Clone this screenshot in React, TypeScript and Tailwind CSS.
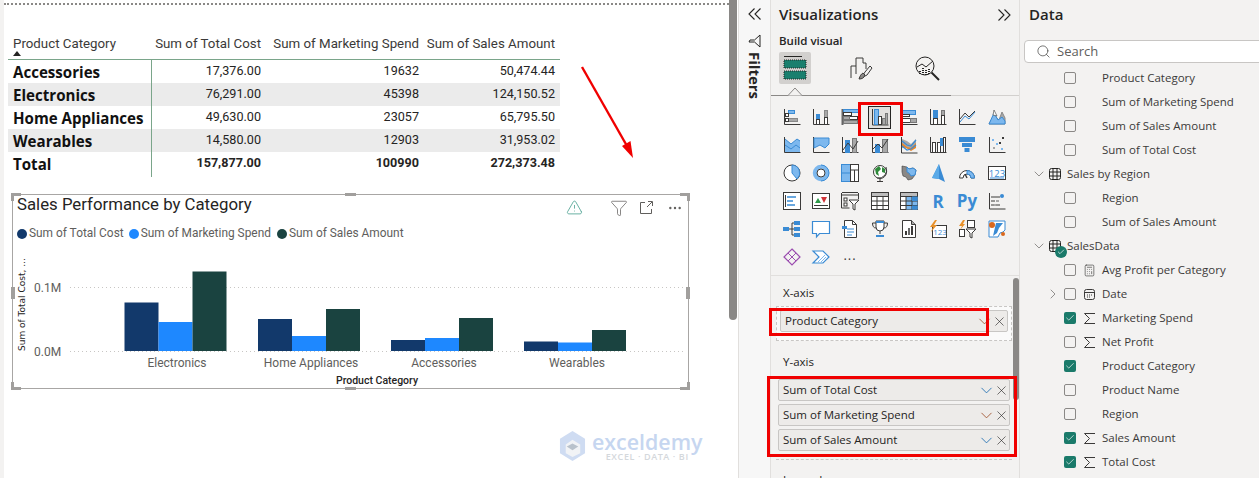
import React from "react";
import { Check, ChevronDown, ChevronRight, X, Search, Calculator, Ellipsis, Funnel, TriangleAlert } from "lucide-react";

const B = "#3a8bd4", L = "#7db8ee", G = "#a8a8a8", D = "#3b3a39";
const Ax = () => <path d="M1.5 1v15.5h16" fill="none" stroke={D} />;
const R = (p: { x: number; y: number; w: number; h: number; f?: string; s?: string }) => (
  <rect x={p.x + 0.5} y={p.y + 0.5} width={p.w} height={p.h} fill={p.f ?? L} stroke={p.s ?? B} />
);

const icons: React.ReactNode[] = [
  <><Ax /><R x={5} y={2} w={6} h={3} /><R x={2} y={5} w={3} h={3} f="#fff" s={D} /><R x={5} y={10} w={9} h={3} f={G} s="#888" /><R x={2} y={10} w={3} h={3} f="#fff" s={D} /></>,
  <><Ax /><R x={4} y={6} w={3} h={5} f={B} /><R x={4} y={11} w={3} h={5} f="#fff" s={D} /><R x={12} y={2} w={3} h={7} f={G} s="#888" /><R x={12} y={9} w={3} h={7} f="#fff" s={D} /></>,
  <><path d="M1.5 1v16" stroke="#666" strokeWidth="2" /><R x={2} y={1} w={15} h={3} /><R x={2} y={4} w={8} h={3} f="#fff" s={D} /><R x={8} y={8} w={8} h={3} f="#fff" s={D} /><R x={2} y={8} w={6} h={3} f={G} s="#777" /><R x={2} y={12} w={14} h={3} f={G} s="#777" /></>,
  <><path d="M1.5 1v16h16" fill="none" stroke={D} /><R x={3} y={1} w={4} h={15} /><R x={7} y={8} w={3} h={8} f="#fff" s={D} /><R x={11} y={10} w={3} h={6} f={G} s="#777" /><R x={14} y={5} w={2} h={11} f={G} s="#777" /></>,
  <><Ax /><R x={2} y={2} w={13} h={4} /><R x={2} y={6} w={7} h={2} f="#fff" s={D} /><R x={2} y={10} w={8} h={4} f="#fff" s={D} /><R x={10} y={10} w={6} h={4} f={G} s="#777" /></>,
  <><Ax /><R x={4} y={2} w={4} h={8} f={B} /><R x={4} y={10} w={4} h={6} f="#fff" s={D} /><R x={12} y={2} w={3} h={5} f={G} s="#777" /><R x={12} y={7} w={3} h={9} f="#fff" s={D} /></>,
  <><Ax /><path d="M2 11l5-6 4 4 6-6" fill="none" stroke={D} /><path d="M2 14l5-6 4 3 6-7" fill="none" stroke={B} /></>,
  <><path d="M1 16l5-9 5 5 3-8 3 6v6z" fill={G} stroke="#888" /><path d="M1 16l5-11 4 7 4-3 3 4v3z" fill={L} stroke={B} /><path d="M5 7l1-5 3 6z" fill="#fff" stroke={D} strokeWidth=".6" /></>,

  <><Ax /><path d="M2 3l6 5 6-5 3 2v11H2z" fill={L} /><path d="M2 3l6 5 6-5 3 2" fill="none" stroke={B} /><path d="M2 9l6 4 5-4 4 3" fill="none" stroke={B} /></>,
  <><Ax /><path d="M2 2h15v6l-4 4-5-3-6 3z" fill={L} stroke={B} /></>,
  <><Ax /><R x={4} y={4} w={4} h={12} f={B} /><R x={11} y={2} w={4} h={14} f={G} s="#777" /><path d="M2 14l5-7 5 6 5-8" fill="none" stroke={D} /></>,
  <><Ax /><R x={4} y={8} w={4} h={8} f={B} /><R x={11} y={3} w={5} h={13} f={G} s="#777" /><path d="M2 13l5-5 4 4 6-9" fill="none" stroke={D} /></>,
  <><path d="M1.5 1v16h16" fill="none" stroke={D} /><path d="M2 3l5 2 4 3 5-5v8l-5 3-5-3-4 1z" fill={G} /><path d="M2 7l5 4 4 1 5-5v5l-5 3-5-3-4-1z" fill="#e8862a" /><path d="M2 5l5 4 4 1 5-6M2 10l5 4 4-1 5-4" fill="none" stroke={B} strokeWidth="1.2" /></>,
  <><Ax /><R x={3} y={6} w={3} h={10} f="#fff" s={D} /><R x={8} y={6} w={3} h={10} f="#fff" s={D} /><R x={11} y={2} w={3} h={7} f={B} /><R x={14} y={1} w={2} h={15} f="#fff" s={D} /></>,
  <><rect x="1" y="1" width="16" height="5" fill={B} /><rect x="4" y="7" width="10" height="4" fill={B} /><rect x="6.500" y="12" width="5" height="4" fill={B} /></>,
  <><Ax /><rect x="4" y="3" width="2" height="2" fill={L} /><rect x="8" y="7" width="2" height="2" fill={L} /><rect x="13" y="12" width="2" height="2" fill={L} /><rect x="14" y="1" width="2" height="2" fill={D} /><rect x="11" y="6" width="2" height="2" fill={D} /><rect x="5" y="11" width="2" height="2" fill={G} /></>,

  <><circle cx="9" cy="9" r="8" fill="#fff" stroke={D} /><path d="M9 9V1a8 8 0 0 1 5 14z" fill={L} stroke={B} /></>,
  <><circle cx="9" cy="9" r="6.2" fill="none" stroke={L} strokeWidth="4" /><path d="M9 1a8 8 0 0 1 0 16" fill="none" stroke={B} /><circle cx="9" cy="9" r="4" fill="#fff" stroke={D} /></>,
  <><R x={0} y={0} w={9} h={17} /><path d="M.5 9h9" stroke={B} /><rect x="9.5" y=".5" width="8" height="17" fill="#fff" stroke={D} /><path d="M9.5 6h8M13.5 6v11" stroke={D} /></>,
  <><circle cx="9" cy="8" r="6.5" fill="#fff" stroke={D} /><path d="M4 5l4-3 2 3-3 3 1 4-3-2z" fill="#2f8a3a" /><path d="M11 3l3 2v4l-3-1z" fill="#2f8a3a" /><path d="M15 3a8 8 0 0 1-9 11M9 15v2M6 17.5h6" fill="none" stroke={D} /></>,
  <><path d="M2 2l5 1 2 2 4-1 3 2-1 5-3 4-4 1-2-3-3-1-1-4z" fill="#8a8886" stroke={D} strokeWidth=".6" /><path d="M7 3l2 2 4-1 3 2-1 5-4 1-2-3-2-1z" fill={L} stroke={B} /></>,
  <><path d="M10 0L3 14l7 1 6 3z" fill={B} /><path d="M10 0L3 14l7 1z" fill="#5aaae8" /></>,
  <><path d="M1.500 14a7.500 7.500 0 0 1 15 0h-3.500a4 4 0 0 0-8 0z" fill="#fff" stroke={D} /><path d="M9 6.500a7.500 7.500 0 0 1 7.500 7.500h-3.500a4 4 0 0 0-4-4z" fill={L} stroke={B} /><path d="M9 14l-2-4" stroke={D} strokeWidth="1.4" /></>,
  <><rect x=".5" y="2.5" width="17" height="13" fill="#fff" stroke={D} /><text x="9" y="12.5" textAnchor="middle" fontSize="9.500" fontFamily="Open Sans" fill={B}>123</text><path d="M2 14h14" stroke={B} /></>,

  <><rect x=".5" y=".5" width="17" height="17" fill="#fff" stroke={D} /><path d="M4 5h9M4 9h6M4 13h8" stroke={B} strokeWidth="1.4" /><path d="M2.500 3v12" stroke={D} /></>,
  <><rect x=".5" y="1.5" width="17" height="15" fill="#fff" stroke={D} /><path d="M3 11l3-5 3 5z" fill="#2f9a4a" /><path d="M9 5h6l-3 6z" fill="#d13438" /><path d="M2 13.500h14" stroke={D} /></>,
  <><path d="M1 .5h16M.5 1v15h8M17.500 1v6" fill="none" stroke={D} /><path d="M1 3h16" stroke={D} /><rect x="3" y="6" width="3" height="3" fill="#fff" stroke={D} /><rect x="3" y="11" width="3" height="3" fill="#fff" stroke={D} /><path d="M8 8h10l-4 4v6l-2-1v-5z" fill="#fff" stroke={D} /></>,
  <><rect x=".5" y=".5" width="17" height="17" fill="#fff" stroke={D} /><path d="M.5 4.500h17M.5 9h17M.5 13.500h17M6 .5v17M12 .5v17" stroke={D} /><rect x=".5" y=".5" width="17" height="4" fill="#bdbdbd" stroke={D} /></>,
  <><rect x=".5" y=".5" width="17" height="17" fill="#fff" stroke={D} /><rect x="6" y="4.500" width="11.500" height="13" fill={L} /><rect x=".5" y=".5" width="17" height="4" fill="#bdbdbd" stroke={D} /><path d="M.5 9h17M.5 13.500h17M6 4.500v13M12 4.500v13" stroke={D} /><rect x="12" y="4.500" width="5.500" height="4.500" fill={B} /><rect x="12" y="13.500" width="5.500" height="4" fill={B} /></>,
  <text x="9" y="16" textAnchor="middle" fontSize="17" fontWeight="700" fontFamily="Open Sans" fill={B}>R</text>,
  <text x="9" y="15" textAnchor="middle" fontSize="17" fontWeight="700" fontFamily="Open Sans" fill={B}>Py</text>,
  <><path d="M1.500 1v16h16" fill="none" stroke={D} /><path d="M3 5h9M3 9h4M3 13h9" stroke={D} /><circle cx="14" cy="4" r="2" fill={B} /><rect x="8" y="8" width="3" height="2" fill={G} /><rect x="6" y="12" width="2" height="2" fill={G} /></>,

  <><rect x="0" y="7" width="6" height="4" fill={B} /><path d="M6 9h3M9 3v12M9 3h2M9 9h2M9 15h2" stroke={D} fill="none" /><rect x="11" y="1" width="6" height="4" fill={B} /><rect x="11" y="7" width="6" height="4" fill={B} /><rect x="11" y="13" width="6" height="4" fill={B} /></>,
  <><path d="M.5 1.500h17v12H7.500l-3 3.500v-3.500h-4z" fill="#fff" stroke={B} strokeWidth="1.2" /></>,
  <><path d="M3.500.5h8l4 4v13h-12z" fill="#fff" stroke={D} /><path d="M11.500.5v4h4" fill="none" stroke={D} /><path d="M1 6h5v3H1z" fill={B} /><path d="M6 9h7M6 12h7M6 15h5" stroke={B} /></>,
  <><path d="M5 1h8v6a4 4 0 0 1-8 0z" fill="#fff" stroke={D} /><path d="M5 3H1.500c0 3 1 5 3.500 5M13 3h3.500c0 3-1 5-3.500 5M9 11v3M5 16.500h8" fill="none" stroke={D} /><rect x="5" y="1" width="8" height="2" fill={B} /><rect x="5" y="15" width="8" height="2" fill={B} /></>,
  <><path d="M2.500.5h9l4 4v13h-13z" fill="#fff" stroke={D} /><path d="M11.500.5v4h4" fill={G} stroke={D} /><rect x="5" y="11" width="2" height="4" fill={D} /><rect x="8" y="8" width="2" height="7" fill="#666" /><rect x="11" y="6" width="2" height="9" fill={D} /></>,
  <><rect x="3.500" y="5.500" width="14" height="12" fill="#fff" stroke={D} /><text x="11" y="15" textAnchor="middle" fontSize="8" fontFamily="Open Sans" fill={B}>123</text><path d="M6 0L1 7h3l-2 5 6-7H5l3-5z" fill="#e8912a" /></>,
  <><rect x="9.500" y=".5" width="7" height="7" fill="#fff" stroke={D} /><rect x="1.500" y="9.500" width="5" height="7" fill="#fff" stroke={D} /><path d="M8 9h10l-4 4v5l-2-1v-4z" fill="#fff" stroke={D} /><path d="M5 0L1 6h3L2 10l5-6H5l2-4z" fill="#e8912a" /></>,
  <><path d="M1 1h16v9l-2 2-3 1-2 4H1z" fill="#fff" stroke={B} /><path d="M8 3h7l-4 5-2 5-4 3z" fill={B} /><circle cx="4" cy="5" r="3" fill="#d9681d" /><circle cx="15" cy="14" r="2" fill="#d9681d" /></>,

  <><path d="M9 1l8 8-8 8-8-8z" fill="none" stroke="#9c4fb0" strokeWidth="1.2" /><path d="M9 1l4 4-4 4-4-4zM9 9l4 4-4 4-4-4z" fill="none" stroke="#9c4fb0" /></>,
  <><path d="M1 3h10l6 6-6 6H1l6-6z" fill="#fff" stroke={B} strokeWidth="1.2" /><path d="M6 14l7-7M9 14l5-5" stroke={L} /></>,
  <text x="9" y="12" textAnchor="middle" fontSize="13" fontFamily="Open Sans" fill={D} letterSpacing="1">...</text>,
];

const Box = ({ checked }: { checked?: boolean }) =>
  checked ? (
    <span className="flex h-3 w-3 items-center justify-center rounded-[2px] bg-[#1a7a6a]"><Check size={10} color="#fff" strokeWidth={1.6} /></span>
  ) : (
    <span className="block h-3 w-3 rounded-[2px] border border-[#8a8886]" />
  );

const Sig = () => (
  <svg width="13" height="13" viewBox="0 0 13 13" fill="none" stroke="#3b3a39"><path d="M12 1.500H1.500L6.500 6.500 1.500 11.500H12" /></svg>
);
const Cal = () => (
  <svg width="13" height="13" viewBox="0 0 13 13" fill="none" stroke="#3b3a39"><rect x="1.500" y="1.500" width="10" height="10" rx="2" /><path d="M1.500 4.500h10" /><path d="M4 7h1M6 7h1M8 7h1M4 9h1M6 9h1" strokeWidth="1" /></svg>
);
const Calc = () => <Calculator size={15} strokeWidth={1.2} color="#3b3a39" />;
const Tbl = () => (
  <svg width="12" height="12" viewBox="0 0 12 12" fill="none" stroke="#252423"><rect x=".5" y=".5" width="11" height="11" rx="2" /><path d="M.5 4h11M.5 8h11M4 .5v11M8 .5v11" /></svg>
);
const Dbl = ({ left }: { left?: boolean }) => (
  <svg width="14" height="12" viewBox="0 0 14 12" fill="none" stroke="#252423" strokeWidth="1.1">
    <path d={left ? "M6.500.5L1 6l5.500 5.500M12.500.5L7 6l5.500 5.500" : "M1.500.5L7 6l-5.500 5.500M7.500.5L13 6l-5.500 5.500"} />
  </svg>
);

const Field = ({ text, checked, icon, expand }: { text: string; checked?: boolean; icon?: React.ReactNode; expand?: boolean }) => (
  <div className="flex h-6 shrink-0 items-center pl-[28px] text-[#3b3a39]">
    <span className="flex w-4 items-center">{expand && <ChevronRight size={16} strokeWidth={1} color="#605e5c" className="-ml-[3px]" />}</span>
    <Box checked={checked} />
    <span className="ml-[7px] flex w-[13px] items-center justify-center">{icon}</span>
    <span className="ml-[6px] whitespace-nowrap">{text}</span>
  </div>
);
const TableRow = ({ text, badge }: { text: string; badge?: boolean }) => (
  <div className="flex h-6 shrink-0 items-center pl-[11px] text-[#3b3a39]">
    <ChevronDown size={16} strokeWidth={1} color="#605e5c" />
    <span className="relative ml-[2px] flex"><Tbl />
      {badge && <span className="absolute left-[6px] top-[6px] flex h-3 w-3 items-center justify-center rounded-full bg-[#1a7a6a]"><Check size={8} color="#fff" strokeWidth={2} /></span>}
    </span>
    <span className="ml-[6px] whitespace-nowrap">{text}</span>
  </div>
);

const Pill = ({ text, warm }: { text: string; warm?: boolean }) => (
  <div className="flex h-[22px] items-center rounded-[2px] border border-[#c8c6c4] bg-[#edebe9] pl-[4px] text-[#252423]">
    <span className="flex-1 whitespace-nowrap">{text}</span>
    <ChevronDown size={19} strokeWidth={1.1} color={warm ? "#a0522d" : "#1f6fb2"} />
    <X size={15} strokeWidth={1} color="#252423" className="-ml-[2px]" />
  </div>
);

const rows = [
  ["Accessories", "17,376.00", "19632", "50,474.44"],
  ["Electronics", "76,291.00", "45398", "124,150.52"],
  ["Home Appliances", "49,630.00", "23057", "65,795.50"],
  ["Wearables", "14,580.00", "12903", "31,953.02"],
];

const Handle = ({ className }: { className: string }) => <span className={`absolute bg-[#a19f9d] ${className}`} />;

const groups: [number, number, number, number][] = [
  [124.5, 302.5, 322, 271.5],
  [258, 319, 336, 309],
  [391, 340, 338, 318],
  [524, 341.5, 342.5, 330],
];
const Bars = () => (
  <svg className="block" width="675" height="144" viewBox="13 244 675 144" fontFamily="Roboto" fontSize="12" fill="#605e5c">
    <path d="M70 287.500H684M70 351.500H684" stroke="#c8c6c4" strokeDasharray="1 3" />
    {groups.map((g) => (
      <g key={g[0]}>
        <rect x={g[0]} y={g[1]} width="34" height={351 - g[1]} fill="#12396b" />
        <rect x={g[0] + 34} y={g[2]} width="34" height={351 - g[2]} fill="#1e88ff" />
        <rect x={g[0] + 68} y={g[3]} width="34" height={351 - g[3]} fill="#1a4340" />
      </g>
    ))}
    <text x="34" y="291.500">0.1M</text>
    <text x="34" y="355.500">0.0M</text>
    <text x="177" y="367" textAnchor="middle">Electronics</text>
    <text x="311" y="367" textAnchor="middle">Home Appliances</text>
    <text x="444" y="367" textAnchor="middle">Accessories</text>
    <text x="577" y="367" textAnchor="middle">Wearables</text>
    <text x="377" y="384" textAnchor="middle" fontSize="10.500" fontWeight="500" fill="#252423">Product Category</text>
    <text transform="translate(25 351) rotate(-90)" fontFamily="DejaVu Sans" fontSize="9" fill="#252423">Sum of Total Cost, ...</text>
  </svg>
);

export default function App() {
  return (
    <div className="flex h-[478px] w-[1259px] overflow-hidden bg-white font-['Open_Sans',sans-serif] text-[11.5px]">
      {/* Canvas */}
      <div className="flex h-full w-[738px] shrink-0 bg-white font-['Roboto',sans-serif]">
        <div className="w-[4px] shrink-0 bg-[#f3f2f1]" />
        <div className="relative w-[725px] shrink-0">
          <div className="mt-[3px] border-t-2 border-dotted border-[#8a8886]" />
          <div className="ml-[4px] mt-[28px] w-[552px] text-[12.600px] text-[#252423]">
            <div className="grid h-[27px] grid-cols-[144px_114px_157px_137px] items-start border-b border-[#7aa58a] pt-[1px] text-[13.300px] text-[#3b3a39]">
              <div className="relative pl-[5px]">Product Category<span className="absolute left-[5px] top-[17px] h-0 w-0 border-x-[4px] border-b-[5px] border-x-transparent border-b-[#252423]" /></div>
              <div className="pr-[5px] text-right">Sum of Total Cost</div>
              <div className="pr-[4px] text-right">Sum of Marketing Spend</div>
              <div className="pr-[5px] text-right">Sum of Sales Amount</div>
            </div>
            {rows.map((r, i) => (
              <div key={r[0]} className={`grid h-[23px] grid-cols-[144px_114px_157px_137px] items-start leading-[21px] ${i % 2 ? "bg-[#ebebeb]" : ""}`}>
                <div className="h-full whitespace-nowrap border-r border-[#7aa58a] pl-[5px] font-['Open_Sans',sans-serif] text-[15.100px] font-bold leading-[25px] text-[#111]">{r[0]}</div>
                <div className="pr-[5px] text-right">{r[1]}</div>
                <div className="pr-[4px] text-right">{r[2]}</div>
                <div className="pr-[5px] text-right">{r[3]}</div>
              </div>
            ))}
            <div className="grid h-[23px] grid-cols-[144px_114px_157px_137px] items-start font-bold leading-[21px]">
              <div className="h-full border-r border-[#7aa58a] pl-[5px] font-['Open_Sans',sans-serif] text-[15.100px] leading-[25px] text-[#111]">Total</div>
              <div className="pr-[5px] text-right">157,877.00</div>
              <div className="pr-[4px] text-right">100990</div>
              <div className="pr-[5px] text-right">272,373.48</div>
            </div>
          </div>

          {/* Chart visual */}
          <div className="relative ml-[8px] mt-[19px] h-[195px] w-[677px] border border-[#a8a6a4]">
            <div className="flex h-[19px] items-center pl-[4px]">
              <span className="flex-1 whitespace-nowrap text-[16.800px] leading-none text-[#252423]">Sales Performance by Category</span>
              <span className="mt-[6px] flex items-center">
                <TriangleAlert size={17} strokeWidth={1.1} color="#3f9a88" />
                <Funnel size={18} strokeWidth={1} color="#605e5c" className="ml-[27px]" />
                <svg width="15" height="15" viewBox="0 0 15 15" fill="none" stroke="#605e5c" className="ml-[11px]"><path d="M6 2.500H1.500v11h11V9M8 7l5-5M9 1.500h4.500V6" /></svg>
                <Ellipsis size={16} strokeWidth={1.6} color="#605e5c" className="ml-[13px] mr-[5px]" />
              </span>
            </div>
            <div className="mt-[10px] flex h-[20px] items-center pl-[4px] text-[11.900px] text-[#605e5c]">
              <span className="mr-[2px] h-[10px] w-[10px] rounded-full bg-[#12396b]" />Sum of Total Cost
              <span className="ml-[5px] mr-[2px] h-[10px] w-[10px] rounded-full bg-[#1e88ff]" />Sum of Marketing Spend
              <span className="ml-[6px] mr-[2px] h-[10px] w-[10px] rounded-full bg-[#1a4340]" />Sum of Sales Amount
            </div>
            <Bars />
            <Handle className="-left-[2px] -top-[2px] h-[8px] w-[3px]" />
            <Handle className="-left-[2px] -top-[2px] h-[3px] w-[10px]" />
            <Handle className="-right-[2px] -top-[2px] h-[8px] w-[3px]" />
            <Handle className="-right-[2px] -top-[2px] h-[3px] w-[10px]" />
            <Handle className="-bottom-[2px] -left-[2px] h-[8px] w-[3px]" />
            <Handle className="-bottom-[2px] -left-[2px] h-[3px] w-[10px]" />
            <Handle className="-bottom-[2px] -right-[2px] h-[8px] w-[3px]" />
            <Handle className="-bottom-[2px] -right-[2px] h-[3px] w-[10px]" />
            <Handle className="-top-[2px] left-[332px] h-[3px] w-[11px]" />
            <Handle className="-bottom-[2px] left-[332px] h-[3px] w-[11px]" />
            <Handle className="-left-[2px] top-[92px] h-[12px] w-[4px]" />
            <Handle className="-right-[2px] top-[92px] h-[12px] w-[4px]" />
          </div>

          {/* Red arrow */}
          <svg className="absolute left-[571px] top-[60px]" width="65" height="105" viewBox="575 60 65 105">
            <path d="M582 67L627 146" stroke="#f00000" strokeWidth="2.400" />
            <path d="M633 158L622 146L630.500 141z" fill="#f00000" />
          </svg>

          {/* Watermark */}
          <div className="absolute left-[555px] top-[431px] flex items-start">
            <svg width="27" height="31" viewBox="0 0 28 32">
              <path d="M14 0L27 8v15L14 31 1 23V8z" fill="#cfdcf2" />
              <path d="M14 9l8 5v9l-8 4-7-4v-9z" fill="#f1f3f6" />
              <path d="M14 13l6 3-6 4-6-4z" fill="#b9c2cc" />
            </svg>
            <div className="ml-[6px] flex flex-col items-center font-['Open_Sans',sans-serif] leading-none">
              <span className="h-[20px] text-[21.400px] font-semibold leading-[22px] text-[#c6d6f0]">exceldemy</span>
              <span className="pt-[1px] text-[9px] font-semibold leading-[10px] tracking-[.6px] text-[#d4d8dc]">EXCEL · DATA · BI</span>
            </div>
          </div>
        </div>
        <div className="relative w-[9px] shrink-0">
          <div className="h-[320px] w-[8px] rounded-b-[4px] bg-[#8a8886]" />
        </div>
      </div>

      {/* Filters */}
      <div className="flex h-full w-[32px] shrink-0 flex-col items-center border-l border-[#e1dfdd] bg-[#f7f7f7] text-[#252423]">
        <span className="mt-[8px] flex"><Dbl left /></span>
        <svg width="14" height="14" viewBox="0 0 14 14" fill="none" stroke="#252423" className="mt-[14px] rotate-90"><path d="M1 2h12L8 7.500V13l-2-1V7.500z" /></svg>
        <span className="mt-[4px] text-[15px] font-bold leading-none [writing-mode:vertical-rl]">Filters</span>
      </div>

      {/* Visualizations */}
      <div className="relative h-full w-[250px] shrink-0 border-x border-[#e1dfdd] bg-[#f3f2f1] text-[#252423]">
        <div className="flex h-[29px] items-center justify-between pl-[8px] pr-[8px]">
          <span className="text-[15px] font-semibold">Visualizations</span>
          <Dbl />
        </div>
        <div className="flex h-[23px] items-center pl-[8px] font-semibold">Build visual</div>
        <div className="flex h-[32px] items-center pl-[8px]">
          <span className="flex h-[32px] w-[32px] flex-col items-center justify-center rounded-[2px] bg-[#d2d0ce]">
            <svg width="24" height="26" viewBox="0 0 24 26">
              <path d="M1 1.500h18" stroke="#252423" />
              <rect x="1" y="5" width="22" height="8" fill="#1a7f6e" stroke="#252423" strokeDasharray="1 1" />
              <rect x="1" y="16" width="22" height="8" fill="#1a7f6e" stroke="#252423" strokeDasharray="1 1" />
            </svg>
          </span>
          <svg width="24" height="24" viewBox="0 0 24 24" fill="none" stroke="#3b3a39" className="ml-[38px]"><path d="M2 22V10h5V2h7v5h3v6M7 10v8M12 22l4-6 5-6 2 2-5 7z" /><path d="M10 23c3 0 5-1 6-4l-2-2c-2 1-3 3-4 6z" fill="#8a8886" /></svg>
          <svg width="26" height="26" viewBox="0 0 26 26" fill="none" stroke="#252423" className="ml-[41px]"><circle cx="11" cy="11" r="9" /><path d="M17.500 17.500L25 25" strokeWidth="2" /><path d="M3 12l5-3 4 3 7-6" /><path d="M6 19v-4M9 20v-7M12 20v-5M15 19v-6" strokeDasharray="1 1" strokeWidth="2" /></svg>
        </div>
        <div className="relative h-[12px] border-b border-[#8a8886]">
          <span className="absolute -bottom-[1px] right-0 h-px w-[68px] bg-[#d2d0ce]" />
          <svg className="absolute -bottom-[1px] left-[16px]" width="16" height="9" viewBox="0 0 16 9"><path d="M0 8.500h1L8 1l7 7.500h1" fill="#f3f2f1" stroke="#8a8886" /></svg>
        </div>
        <div className="ml-[6px] mt-[7px] grid h-[168px] grid-cols-[repeat(8,29.300px)] grid-rows-[repeat(6,28px)] place-items-center">
          {icons.map((c, i) => (
            <span key={i} className={`flex h-[23px] w-[23px] items-center justify-center ${i === 3 ? "border border-[#252423] bg-[#e1dfdd]" : ""}`}>
              <svg width="18" height="18" viewBox="0 0 18 18" overflow="visible">{c}</svg>
            </span>
          ))}
        </div>
        <div className="mt-[4px] border-t border-[#e1dfdd] pl-[5px] pr-[7px]">
          <div className="flex h-[30px] items-end pb-[5px] pl-[7px]">X-axis</div>
          <div className="h-[35px] border border-dashed border-[#c8c6c4] bg-[#fafafa] p-[3px] pb-0">
            <Pill text="Product Category" warm />
          </div>
          <div className="flex h-[37px] items-end pb-[8px] pl-[7px]">Y-axis</div>
          <div className="flex h-[82px] flex-col gap-[3px] border-b border-dashed border-[#c8c6c4] px-[2px] pt-[1px]">
            <Pill text="Sum of Total Cost" />
            <Pill text="Sum of Marketing Spend" warm />
            <Pill text="Sum of Sales Amount" />
          </div>
          <div className="pl-[7px] pt-[11px]">Legend</div>
        </div>
        <span className="absolute left-[242px] top-[278px] h-[122px] w-[6px] rounded-[3px] bg-[#8a8886]" />
        <span className="absolute left-[87px] top-[102px] h-[34px] w-[45px] border-[3px] border-[#f00000]" />
        <span className="absolute left-[-2px] top-[308px] h-[28px] w-[220px] border-[3px] border-[#f00000]" />
        <span className="absolute left-[-4px] top-[376px] h-[81px] w-[250px] border-[3px] border-[#f00000]" />
      </div>

      {/* Data */}
      <div className="flex h-full flex-1 flex-col overflow-hidden bg-[#f3f2f1] text-[#252423]">
        <div className="flex h-[29px] shrink-0 items-center pl-[9px] text-[15px] font-semibold">Data</div>
        <div className="ml-[4px] mt-[11px] flex h-[23px] w-[300px] shrink-0 items-center rounded-[4px] border border-[#c8c6c4] bg-white pl-[11px] text-[#605e5c]">
          <Search size={15} strokeWidth={1.1} color="#3b3a39" />
          <span className="ml-[6px] pt-[1px] text-[13px]">Search</span>
        </div>
        <div className="mt-[8px] flex min-h-0 flex-1 flex-col overflow-hidden">
          <div className="-mt-[5px] flex flex-col">
            <Field text="Product Category" />
            <Field text="Sum of Marketing Spend" />
            <Field text="Sum of Sales Amount" />
            <Field text="Sum of Total Cost" />
            <TableRow text="Sales by Region" />
            <Field text="Region" />
            <Field text="Sum of Sales Amount" />
            <TableRow text="SalesData" badge />
            <Field text="Avg Profit per Category" icon={<Calc />} />
            <Field text="Date" expand icon={<Cal />} />
            <Field text="Marketing Spend" checked icon={<Sig />} />
            <Field text="Net Profit" icon={<Sig />} />
            <Field text="Product Category" checked />
            <Field text="Product Name" />
            <Field text="Region" />
            <Field text="Sales Amount" checked icon={<Sig />} />
            <Field text="Total Cost" checked icon={<Sig />} />
          </div>
        </div>
      </div>
    </div>
  );
}
